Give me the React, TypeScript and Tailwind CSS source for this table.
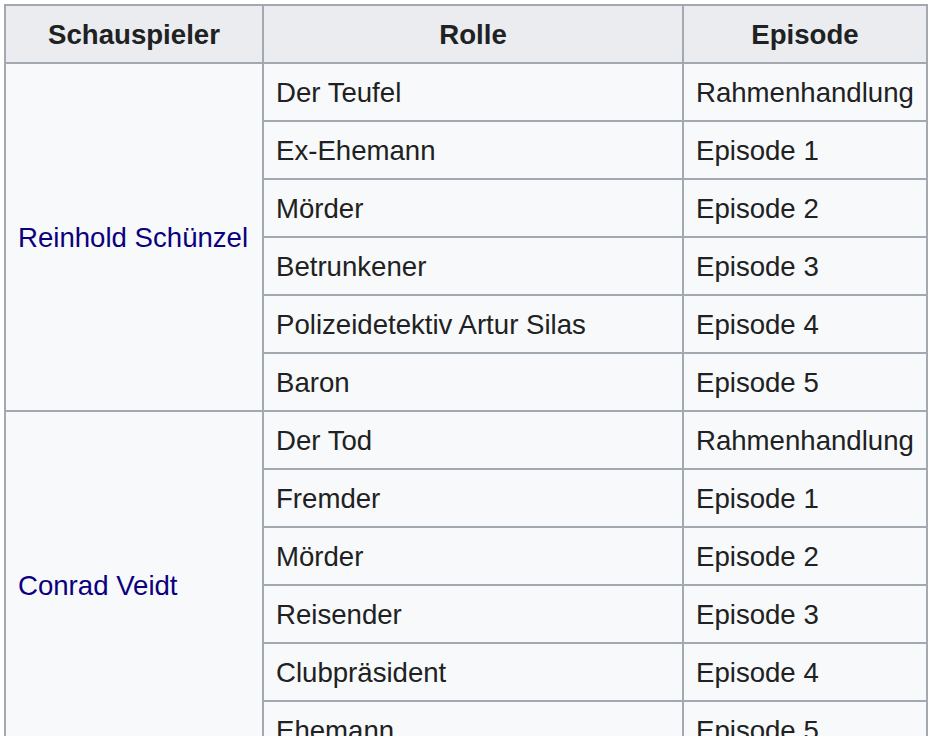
const CAST = [
  {
    actor: 'Reinhold Schünzel',
    roles: [
      ['Der Teufel', 'Rahmenhandlung'],
      ['Ex-Ehemann', 'Episode 1'],
      ['Mörder', 'Episode 2'],
      ['Betrunkener', 'Episode 3'],
      ['Polizeidetektiv Artur Silas', 'Episode 4'],
      ['Baron', 'Episode 5'],
    ],
  },
  {
    actor: 'Conrad Veidt',
    roles: [
      ['Der Tod', 'Rahmenhandlung'],
      ['Fremder', 'Episode 1'],
      ['Mörder', 'Episode 2'],
      ['Reisender', 'Episode 3'],
      ['Clubpräsident', 'Episode 4'],
      ['Ehemann', 'Episode 5'],
    ],
  },
];

const cell = 'flex h-[58px] items-center whitespace-nowrap border-r-2 border-b-2 border-[#a2a9b1] px-[12px] pt-[2px]';

export default function App() {
  return (
    <div className="h-[736px] w-[928px] overflow-hidden bg-white pl-[4px] pt-[4px] font-['Liberation_Sans',Arial,sans-serif] text-[27.6px] text-[#202122]">
      <div className="grid w-[924px] grid-cols-[258px_420px_244px] border-t-2 border-l-2 border-[#a2a9b1] bg-[#f8f9fa]">
        {['Schauspieler', 'Rolle', 'Episode'].map((h) => (
          <div key={h} className={`${cell} justify-center bg-[#eaecf0] font-bold`}>
            {h}
          </div>
        ))}
        {CAST.map((group) => (
          <div key={group.actor} className="contents">
            <div className="row-span-6 flex items-center whitespace-nowrap border-r-2 border-b-2 border-[#a2a9b1] pl-[12px] pt-[2px]">
              <a href="#" className="text-[#0b0080]">
                {group.actor}
              </a>
            </div>
            {group.roles.map(([role, ep], i) => (
              <div key={i} className="contents">
                <div className={cell}>{role}</div>
                <div className={cell}>{ep}</div>
              </div>
            ))}
          </div>
        ))}
      </div>
    </div>
  );
}
